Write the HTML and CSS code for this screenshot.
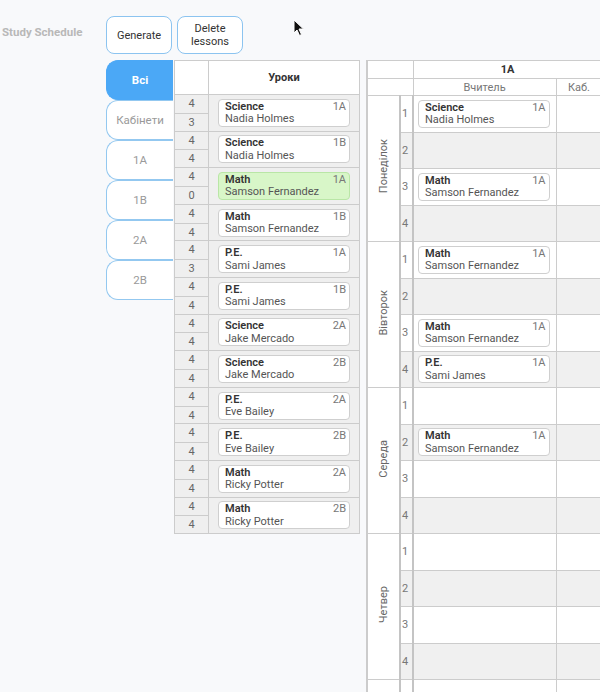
FILE: index.html
```html
<!DOCTYPE html>
<html lang="uk">
<head>
    <meta charset="UTF-8">
    <meta name="viewport" content="width=device-width, initial-scale=1.0">
    <title>Study Schedule</title>
    <link rel="stylesheet" href="styles.css">
</head>
<body>
    <div class="page">
        <div class="title">Study Schedule</div>
        <div class="main">
            <div class="toolbar">
                <button class="btn">Generate</button>
                <button class="btn">Delete lessons</button>
            </div>
            <div class="workspace">
                <nav class="tabs">
                    <div class="tab active">Всі</div>
                    <div class="tab">Кабінети</div>
                    <div class="tab">1A</div>
                    <div class="tab">1B</div>
                    <div class="tab">2A</div>
                    <div class="tab">2B</div>
                </nav>

                <table class="lessons">
                    <colgroup><col class="c-count"><col class="c-lesson"></colgroup>
                    <thead>
                        <tr><th></th><th>Уроки</th></tr>
                    </thead>
                    <tbody>
                        <tr>
                            <td><div class="count"><div>4</div><div>3</div></div></td>
                            <td><div class="card"><div class="line"><b>Science</b><span class="cls">1A</span></div><div class="teacher">Nadia Holmes</div></div></td>
                        </tr>
                        <tr>
                            <td><div class="count"><div>4</div><div>4</div></div></td>
                            <td><div class="card"><div class="line"><b>Science</b><span class="cls">1B</span></div><div class="teacher">Nadia Holmes</div></div></td>
                        </tr>
                        <tr>
                            <td><div class="count"><div>4</div><div>0</div></div></td>
                            <td><div class="card done"><div class="line"><b>Math</b><span class="cls">1A</span></div><div class="teacher">Samson Fernandez</div></div></td>
                        </tr>
                        <tr>
                            <td><div class="count"><div>4</div><div>4</div></div></td>
                            <td><div class="card"><div class="line"><b>Math</b><span class="cls">1B</span></div><div class="teacher">Samson Fernandez</div></div></td>
                        </tr>
                        <tr>
                            <td><div class="count"><div>4</div><div>3</div></div></td>
                            <td><div class="card"><div class="line"><b>P.E.</b><span class="cls">1A</span></div><div class="teacher">Sami James</div></div></td>
                        </tr>
                        <tr>
                            <td><div class="count"><div>4</div><div>4</div></div></td>
                            <td><div class="card"><div class="line"><b>P.E.</b><span class="cls">1B</span></div><div class="teacher">Sami James</div></div></td>
                        </tr>
                        <tr>
                            <td><div class="count"><div>4</div><div>4</div></div></td>
                            <td><div class="card"><div class="line"><b>Science</b><span class="cls">2A</span></div><div class="teacher">Jake Mercado</div></div></td>
                        </tr>
                        <tr>
                            <td><div class="count"><div>4</div><div>4</div></div></td>
                            <td><div class="card"><div class="line"><b>Science</b><span class="cls">2B</span></div><div class="teacher">Jake Mercado</div></div></td>
                        </tr>
                        <tr>
                            <td><div class="count"><div>4</div><div>4</div></div></td>
                            <td><div class="card"><div class="line"><b>P.E.</b><span class="cls">2A</span></div><div class="teacher">Eve Bailey</div></div></td>
                        </tr>
                        <tr>
                            <td><div class="count"><div>4</div><div>4</div></div></td>
                            <td><div class="card"><div class="line"><b>P.E.</b><span class="cls">2B</span></div><div class="teacher">Eve Bailey</div></div></td>
                        </tr>
                        <tr>
                            <td><div class="count"><div>4</div><div>4</div></div></td>
                            <td><div class="card"><div class="line"><b>Math</b><span class="cls">2A</span></div><div class="teacher">Ricky Potter</div></div></td>
                        </tr>
                        <tr>
                            <td><div class="count"><div>4</div><div>4</div></div></td>
                            <td><div class="card"><div class="line"><b>Math</b><span class="cls">2B</span></div><div class="teacher">Ricky Potter</div></div></td>
                        </tr>
                    </tbody>
                </table>

                <table class="schedule">
                    <colgroup>
                        <col class="c-day"><col class="c-num"><col class="c-teacher"><col class="c-room">
                    </colgroup>
                    <thead>
                        <tr><th colspan="2"></th><th colspan="2">1A</th></tr>
                        <tr class="sub"><th colspan="2"></th><th>Вчитель</th><th>Каб.</th></tr>
                    </thead>
                    <tbody>
                        <tr>
                            <td class="day" rowspan="4"><span>Понеділок</span></td>
                            <td class="num">1</td>
                            <td><div class="card slot"><div class="line"><b>Science</b><span class="cls">1A</span></div><div class="teacher">Nadia Holmes</div></div></td>
                            <td></td>
                        </tr>
                        <tr class="even"><td class="num">2</td><td></td><td></td></tr>
                        <tr>
                            <td class="num">3</td>
                            <td><div class="card slot"><div class="line"><b>Math</b><span class="cls">1A</span></div><div class="teacher">Samson Fernandez</div></div></td>
                            <td></td>
                        </tr>
                        <tr class="even"><td class="num">4</td><td></td><td></td></tr>

                        <tr>
                            <td class="day" rowspan="4"><span>Вівторок</span></td>
                            <td class="num">1</td>
                            <td><div class="card slot"><div class="line"><b>Math</b><span class="cls">1A</span></div><div class="teacher">Samson Fernandez</div></div></td>
                            <td></td>
                        </tr>
                        <tr class="even"><td class="num">2</td><td></td><td></td></tr>
                        <tr>
                            <td class="num">3</td>
                            <td><div class="card slot"><div class="line"><b>Math</b><span class="cls">1A</span></div><div class="teacher">Samson Fernandez</div></div></td>
                            <td></td>
                        </tr>
                        <tr class="even">
                            <td class="num">4</td>
                            <td><div class="card slot"><div class="line"><b>P.E.</b><span class="cls">1A</span></div><div class="teacher">Sami James</div></div></td>
                            <td></td>
                        </tr>

                        <tr>
                            <td class="day" rowspan="4"><span>Середа</span></td>
                            <td class="num">1</td><td></td><td></td>
                        </tr>
                        <tr class="even">
                            <td class="num">2</td>
                            <td><div class="card slot"><div class="line"><b>Math</b><span class="cls">1A</span></div><div class="teacher">Samson Fernandez</div></div></td>
                            <td></td>
                        </tr>
                        <tr><td class="num">3</td><td></td><td></td></tr>
                        <tr class="even"><td class="num">4</td><td></td><td></td></tr>

                        <tr>
                            <td class="day" rowspan="4"><span>Четвер</span></td>
                            <td class="num">1</td><td></td><td></td>
                        </tr>
                        <tr class="even"><td class="num">2</td><td></td><td></td></tr>
                        <tr><td class="num">3</td><td></td><td></td></tr>
                        <tr class="even"><td class="num">4</td><td></td><td></td></tr>

                        <tr><td class="day"></td><td class="num"></td><td></td><td></td></tr>
                    </tbody>
                </table>
            </div>
        </div>
    </div>

    <svg class="cursor" width="12" height="18" viewBox="0 0 12 18">
        <path d="M1 1 L1 14 L4 11 L6.5 16.5 L8.5 15.5 L6 10 L10.5 10 Z" fill="#111" stroke="#fff" stroke-width="1"/>
    </svg>
</body>
</html>
```

FILE: styles.css
```css
* {
    box-sizing: border-box;
}

html, body {
    margin: 0;
    height: 692px;
    overflow: hidden;
}

body {
    position: relative;
    background-color: #f8f9fb;
    font-family: Roboto, "Noto Sans", sans-serif;
    color: #333;
}

.page {
    display: flex;
    padding: 16px 0 0 2px;
}

.title {
    width: 104px;
    height: 31px;
    display: flex;
    align-items: center;
    font-size: 11.5px;
    font-weight: bold;
    color: #b8b8b8;
    flex-shrink: 0;
}

.main {
    display: flex;
    flex-direction: column;
    gap: 6px;
}

.toolbar {
    display: flex;
    gap: 5px;
}

.btn {
    width: 66px;
    height: 38px;
    padding: 0 8px;
    border: 1px solid #8cc4f0;
    border-radius: 8px;
    background-color: #fff;
    font-family: Roboto, sans-serif;
    font-size: 11px;
    line-height: 13px;
    color: #333;
}

.workspace {
    display: flex;
    align-items: flex-start;
}

/* tabs */
.tabs {
    width: 67px;
    margin-right: 1px;
    display: flex;
    flex-direction: column;
    flex-shrink: 0;
}

.tab {
    height: 40px;
    display: flex;
    align-items: center;
    justify-content: center;
    border: 1px solid #93c8f0;
    border-right: none;
    border-radius: 12px 0 0 12px;
    background-color: #fff;
    font-size: 11.5px;
    color: #9a9a9a;
}

.tab.active {
    background-color: #4ba8f6;
    border-color: #4ba8f6;
    color: #fff;
    font-weight: bold;
}

/* lessons list */
.lessons {
    width: 185px;
    margin-right: 6px;
    flex-shrink: 0;
    table-layout: fixed;
    border-collapse: collapse;
    background-color: #efefef;
}

.lessons .c-count { width: 34px; }
.lessons .c-lesson { width: 151px; }

.lessons th {
    height: 34px;
    border: 1px solid #ccc;
    background-color: #fff;
    font-size: 11px;
    font-weight: bold;
}

.lessons td {
    height: 35.6px;
    padding: 0;
    border: 1px solid #ccc;
    vertical-align: middle;
}

.count div {
    height: 17.8px;
    line-height: 17px;
    text-align: center;
    font-size: 11px;
    color: #666;
}

.count div + div {
    border-top: 1px solid #ccc;
}

.card {
    height: 28px;
    margin: 0 9px 0 9px;
    padding: 1px 3px 1px 6px;
    border: 1px solid #cfcfcf;
    border-radius: 4px;
    background-color: #fff;
    font-size: 11px;
    line-height: 12.5px;
}

.card.done {
    background-color: #d8f6c8;
    border-color: #b9e6a6;
}

.card .line {
    display: flex;
    justify-content: space-between;
}

.card b {
    font-weight: 600;
    color: #333;
}

.card .cls {
    color: #777;
}

.card .teacher {
    color: #555;
}

.card.slot {
    margin: 0 6px 0 4px;
}

/* schedule grid */
.schedule {
    width: 235px;
    flex-shrink: 0;
    table-layout: fixed;
    border-collapse: collapse;
    background-color: #fff;
    border-left: 2px solid #ccc;
}

.schedule .c-day { width: 33px; }
.schedule .c-num { width: 13px; }
.schedule .c-teacher { width: 143px; }
.schedule .c-room { width: 46px; }

.schedule th {
    height: 18px;
    padding: 0;
    border: 1px solid #ccc;
    font-size: 11px;
    font-weight: bold;
}

.schedule .sub th {
    height: 17px;
    font-weight: normal;
    color: #777;
}

.schedule td {
    height: 36.5px;
    padding: 0;
    border: 1px solid #ccc;
    vertical-align: middle;
}

.schedule tr.even td {
    background-color: #f0f0f0;
}

.schedule td.num {
    padding-left: 1px;
    border-left: 2px solid #c4c4c4;
    border-right: 2px solid #c4c4c4;
    font-size: 11px;
    color: #777;
}

.schedule td.day {
    text-align: center;
    background-color: #fff;
}

.day span {
    display: inline-block;
    writing-mode: vertical-rl;
    transform: rotate(180deg);
    font-size: 11px;
    color: #666;
}

.cursor {
    position: absolute;
    left: 293px;
    top: 19px;
}
```
